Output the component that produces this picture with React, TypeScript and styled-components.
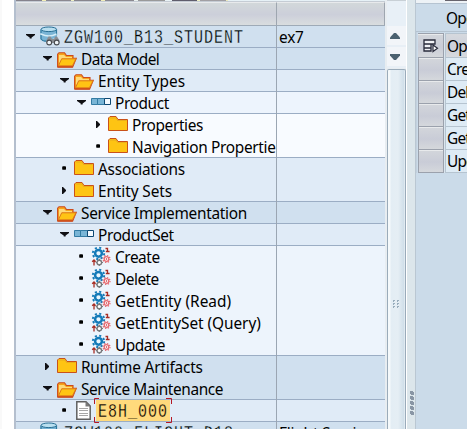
import React from "react";
import styled, { createGlobalStyle } from "styled-components";

const Global = createGlobalStyle`
  * { box-sizing: border-box; }
  html, body { margin: 0; overflow: hidden; background: #fff; }
  svg { display: block; flex: none; }
`;

const Screen = styled.main`
  display: flex;
  width: 467px;
  height: 429px;
  overflow: hidden;
  background: #fff;
  color: #000;
  font-family: "Noto Sans", "Open Sans", sans-serif;
  font-size: 15.4px;
`;

const Margin = styled.div`
  width: 14px;
  flex: none;
  border-left: 2px solid #f9f9f9;
`;

const TreePanel = styled.section`
  display: flex;
  flex-direction: column;
  width: 371px;
  flex: none;
  border-left: 2px solid #b4bfce;
`;

const ToolbarEdge = styled.div`
  height: 2px;
  flex: none;
  background: linear-gradient(90deg, #85838c 0 26px, #f3efb6 26px 30px, #8b8990 30px 55px, #eef0c4 55px 58px, #87858c 58px 85px, #f0edb9 85px 89px, #8b8990 89px 118px, #e8f0ee 118px 122px, #999 122px 149px, #e9f3f6 149px 156px, #5f5d6c 156px 181px, #eef0c4 181px 184px, #a19fa3 184px 210px, #edebbd 210px 212px, #e6f1f6 212px);
  border-bottom: 1px solid #c5ccd4;
`;

const TreeHeader = styled.div`
  display: grid;
  grid-template-columns: 261px 108px;
  height: 24px;
  flex: none;
  border-bottom: 1px solid #9eaab7;
`;

const HeaderCell = styled.div`
  border-right: 1px solid #9ea6b0;
  border-top: 1px solid #e8eaec;
  background: linear-gradient(#d2d8da 0%, #cccfda 52%, #d9dddf 100%);
`;

const TreeRow = styled.div<{ $bg: string; $line: boolean; $raised: boolean }>`
  display: grid;
  grid-template-columns: 261px 108px;
  height: 22px;
  flex: none;
  background: ${(p) => p.$bg};
  border-bottom: 1px solid ${(p) => (p.$line ? "#9badc4" : p.$bg)};
  ${(p) => p.$raised && "z-index: 1;"}
`;

const NameCell = styled.div<{ $indent: number; $clip: boolean }>`
  display: flex;
  align-items: center;
  padding-left: ${(p) => p.$indent}px;
  overflow: ${(p) => (p.$clip ? "hidden" : "visible")};
  border-right: 1px solid #9ba6b3;
  height: 22px;
  padding-bottom: 1px;
`;

const IconSlot = styled.span`
  display: flex;
  width: 24px;
  flex: none;
`;

const Toggle = styled.span`
  display: flex;
  width: 14px;
  flex: none;
`;

const Label = styled.span<{ $gap: number }>`
  white-space: pre;
  line-height: 21px;
  padding-top: 1px;
  letter-spacing: ${(p) => p.$gap}px;
`;

const MonoLabel = styled.span<{ $bg: string }>`
  display: inline-block;
  white-space: pre;
  font-family: "Liberation Mono", monospace;
  font-size: 20px;
  letter-spacing: 1.33px;
  line-height: 21px;
  -webkit-text-stroke: 0.3px ${(p) => p.$bg};
  transform: translateY(1px) scaleX(0.75);
  transform-origin: left center;
`;

const Selected = styled.span`
  position: relative;
  display: flex;
  align-items: center;
  width: 74px;
  height: 21px;
  flex: none;
  margin-left: -2px;
  padding-left: 2px;
  background: #ffda7c;
`;

const Corners = styled.svg`
  position: absolute;
  left: -2px;
  top: -2px;
`;

const ValueCell = styled.div`
  padding-left: 2px;
  line-height: 24px;
  letter-spacing: -0.2px;
  overflow: hidden;
  white-space: nowrap;
`;

const ScrollColumn = styled.div`
  display: flex;
  flex-direction: column;
  width: 21px;
  flex: none;
  padding-left: 2px;
  background: #e8edf1;
`;

const ScrollTop = styled.div`
  height: 26px;
  flex: none;
  border-top: 1px solid #c8d0d6;
  background: #e8f0f7;
`;

const ScrollButton = styled.div`
  display: flex;
  align-items: center;
  justify-content: center;
  height: 21px;
  flex: none;
  padding-right: 3px;
  background: #f2f5f9;
  border-bottom: 2px solid #e8eff6;
`;

const Thumb = styled.div`
  display: flex;
  justify-content: center;
  flex: 1;
  width: 19px;
  margin-top: 1px;
  padding-top: 230px;
  padding-right: 1px;
  border: 1px solid #9aabba;
  border-bottom: 0;
  border-radius: 2px 2px 0 0;
  background: linear-gradient(90deg, #f5f9fb 0 2px, #e3edf4 3px, #e5eef4 10px, #cfdee9 16px, #f1f6f9 17px);
`;

const Splitter = styled.div`
  display: flex;
  align-items: flex-end;
  justify-content: flex-end;
  width: 10px;
  flex: none;
  padding: 0 1px 14px 0;
  border-left: 1px solid #fff;
  border-right: 1px solid #bac7d2;
  background: #dce6eb;
`;

const RightPanel = styled.section`
  display: flex;
  flex-direction: column;
  width: 51px;
  flex: none;
  overflow: hidden;
  background: #cbdbe9;
  letter-spacing: -0.8px;
`;

const RightTop = styled.div`
  height: 4px;
  flex: none;
  background: linear-gradient(90deg, #edf2f6 0 29px, #67646d 29px) top / 100% 1px no-repeat #edf2f6;
  border-bottom: 1px solid #b6c4d1;
`;

const RightTitle = styled.div`
  height: 28px;
  flex: none;
  padding-left: 30px;
  line-height: 29px;
  border-bottom: 1px solid #b5c3d0;
`;

const OperationGrid = styled.div`
  display: flex;
  flex-direction: column;
  padding: 1px 0 0 1px;
  border-left: 1px solid #c3d1de;
`;

const OperationRow = styled.div<{ $head?: boolean }>`
  display: grid;
  grid-template-columns: 26px 24px;
  gap: 1px;
  height: ${(p) => (p.$head ? 25 : 23)}px;
  background: #dae5ee;
`;

const Selector = styled.div<{ $head?: boolean }>`
  display: flex;
  align-items: center;
  justify-content: center;
  border: 1px solid #9ba1ac;
  border-width: ${(p) => (p.$head ? "1px 1px 1px 0" : "0 1px 1px 1px")};
  box-shadow: inset 0 1px #e8eaec;
  background: linear-gradient(#d3d6db, #c9ccd7 55%, #d5d8dc);
`;

const Operation = styled.div<{ $head?: boolean }>`
  padding-left: 1px;
  line-height: ${(p) => (p.$head ? 25 : 23)}px;
  border: 1px solid #b6c4d0;
  border-width: ${(p) => (p.$head ? "1px 0 1px 1px" : "0 0 1px 1px")};
  background: ${(p) => (p.$head ? "linear-gradient(#d6d9de, #ccd0da 55%, #d7dade)" : "#deebf5")};
  white-space: nowrap;
  overflow: hidden;
`;

type Mark = "open" | "closed" | "leaf" | "none";
const ToggleIcon = ({ kind }: { kind: Mark }) => (
  <svg width="10" height="11" viewBox="0 -1 10 11">
    {kind === "open" && <path d="M0 2H9V3L5.6 5.6V6.6H3.7V5.6L0 3Z" fill="#101014" />}
    {kind === "closed" && <path d="M2 1H3L6 4V5L3 8H2Z" fill="#101014" />}
    {kind === "leaf" && <path d="M2.6 2.3H5.6V2.7H6V5.4H5.6V5.8H2.6V5.4H2.2V2.7H2.6Z" fill="#000" />}
  </svg>
);

type IconKind = "database" | "folderOpen" | "folder" | "type" | "gears" | "page";
const TreeIcon = ({ kind }: { kind: IconKind }) => {
  if (kind === "folder")
    return (
      <svg width="20" height="19" viewBox="0 0 20 19">
        <path d="M.5 15.5V3L2 1.5H8L10 4.5H19.5V15.5Z" fill="#fec413" stroke="#c9511a" />
        <path d="M2 3L8 3L9.5 5.5H18.5" fill="none" stroke="#dfa520" strokeWidth=".7" />
      </svg>
    );
  if (kind === "folderOpen")
    return (
      <svg width="20" height="19" viewBox="0 -2 20 19">
        <path d="M.6 15.9V3.2L2 1.7H7.5L9.5 4.5H16V7.3H19.3L15.7 15.9Z" fill="#f6a41a" stroke="#cd4b1c" strokeWidth="1.1" />
        <path d="M2 4H7L9 6H15V7.5H5L2 13Z" fill="#ffdb7a" />
        <path d="M4.7 7.8H19L15.4 14.8H1.4Z" fill="#ffc414" stroke="#dd7b1c" strokeWidth="1" />
        <path d="M.7 16H15.8" stroke="#cd4b1c" strokeWidth="1.4" />
      </svg>
    );
  if (kind === "type")
    return (
      <svg width="20" height="19" viewBox="0 0 20 19">
        <path d="M.5 5.5H6.5V11.5H.5ZM6.5 5.5H13.5V11.5H6.5Z" fill="#79b5d6" stroke="#337ba3" />
        <path d="M13.5 5.5H19.5V11.5H13.5Z" fill="#f4faff" stroke="#0e4873" />
      </svg>
    );
  if (kind === "database")
    return (
      <svg width="20" height="21" viewBox="0 0 20 21">
        <path d="M.5 3V13Q3 16 7 15.6L17 11V3Z" fill="#79b4d5" />
        <path d="M1 7V4M1 9V13Q3 15.5 6 15M16.5 4V9" fill="none" stroke="#2e789e" strokeWidth="1.2" />
        <ellipse cx="8.8" cy="3.3" rx="7.8" ry="2.3" fill="#b9dff0" stroke="#286f95" strokeWidth="1" />
        <path d="M1 8Q9 12 16.5 8" fill="none" stroke="#d4ecf6" strokeWidth="1.6" />
        <path d="M6.5 14L8.5 10.5H10.5L12 13H14L15.3 10.5H17L19.3 14V17H6.3Z" fill="#8a8d92" />
        <circle cx="9.2" cy="16.5" r="2.4" fill="#f0f4f7" stroke="#46484d" strokeWidth="1.1" />
        <circle cx="16.7" cy="16.5" r="2.4" fill="#f0f4f7" stroke="#46484d" strokeWidth="1.1" />
      </svg>
    );
  if (kind === "page")
    return (
      <svg width="20" height="21" viewBox="-2 0 20 21">
        <path d="M.8 1.8H10L14.2 6V19.2H.8Z" fill="#fff" stroke="#606060" strokeWidth="1.5" />
        <path d="M9.5 1.5V6.5H14.5Z" fill="#787878" />
        <path d="M3 8.5H12M3 10.5H12M3 13.5H12M3 15.5H12" stroke="#a7a7a7" />
      </svg>
    );
  return (
    <svg width="20" height="21" viewBox="0 0 20 21">
      <circle cx="7.5" cy="7.3" r="3.4" fill="#eaf6fe" stroke="#147ab8" strokeWidth="2.5" />
      <circle cx="7.5" cy="7.3" r="5.7" fill="none" stroke="#147ab8" strokeWidth="1.9" strokeDasharray="2.1 2.38" />
      <circle cx="8.3" cy="16.5" r="2.3" fill="#fff" stroke="#77797c" strokeWidth="1.4" />
      <path d="M8.3 12.8V14M4.8 16.5H6M10.6 16.5H12M8.3 18.8V20" stroke="#77797c" strokeWidth="1.2" />
      <circle cx="15.5" cy="13" r="2.3" fill="#fff" stroke="#e6696f" strokeWidth="1.2" />
      <circle cx="15.5" cy="13" r="3.5" fill="none" stroke="#e6696f" strokeWidth="1.2" strokeDasharray="1.35 1.4" />
      <circle cx="15.5" cy="13" r=".8" fill="#c22e38" />
      <path d="M14.5 2.5H16.5V6M14.8 5.5H18.6M3 13.7V19.5M1.2 15.8L3 14L4.6 15.8" fill="none" stroke="#a72c23" strokeWidth="1.3" />
    </svg>
  );
};

interface Node {
  text: string;
  level: number;
  mark: Mark;
  icon: IconKind;
  bg: string;
  line?: boolean;
  gap?: number;
  mono?: boolean;
  selected?: boolean;
  value?: string;
}

const nodes: Node[] = [
  { text: "ZGW100_B13_STUDENT", level: 0, mark: "open", icon: "database", bg: "#d0e0ef", line: true, mono: true, value: "ex7" },
  { text: "Data Model", level: 1, mark: "open", icon: "folderOpen", bg: "#d0e0ef", line: true, gap: -0.52 },
  { text: "Entity Types", level: 2, mark: "open", icon: "folderOpen", bg: "#e0ebf7", line: true, gap: 0.05 },
  { text: "Product", level: 3, mark: "open", icon: "type", bg: "#edf4fd", line: true, gap: -0.4 },
  { text: "Properties", level: 4, mark: "closed", icon: "folder", bg: "#f8fbff", gap: -0.38 },
  { text: "Navigation Propertie", level: 4, mark: "leaf", icon: "folder", bg: "#f8fbff", line: true, gap: -0.32 },
  { text: "Associations", level: 2, mark: "leaf", icon: "folder", bg: "#e0ebf7", gap: -0.22 },
  { text: "Entity Sets", level: 2, mark: "closed", icon: "folder", bg: "#e0ebf7", line: true, gap: -0.1 },
  { text: "Service Implementation", level: 1, mark: "open", icon: "folderOpen", bg: "#d0e0ef", line: true, gap: -0.28 },
  { text: "ProductSet", level: 2, mark: "open", icon: "type", bg: "#e0ebf7", line: true, gap: -0.35 },
  { text: "Create", level: 3, mark: "leaf", icon: "gears", bg: "#edf4fc", gap: -0.45 },
  { text: "Delete", level: 3, mark: "leaf", icon: "gears", bg: "#edf4fc", gap: -0.5 },
  { text: "GetEntity (Read)", level: 3, mark: "leaf", icon: "gears", bg: "#edf4fc", gap: 0 },
  { text: "GetEntitySet (Query)", level: 3, mark: "leaf", icon: "gears", bg: "#edf4fc", gap: -0.05 },
  { text: "Update", level: 3, mark: "leaf", icon: "gears", bg: "#edf4fc", line: true, gap: -0.5 },
  { text: "Runtime Artifacts", level: 1, mark: "closed", icon: "folder", bg: "#d0e0ef", gap: -0.2 },
  { text: "Service Maintenance", level: 1, mark: "open", icon: "folderOpen", bg: "#d0e0ef", line: true, gap: -0.38 },
  { text: "E8H_000", level: 2, mark: "leaf", icon: "page", bg: "#e0ebf7", line: true, mono: true, selected: true },
  { text: "ZGW100_FLIGHT_D18", level: 0, mark: "none", icon: "database", bg: "#d0e0ef", mono: true, value: "Flight Service" },
];

const NodeLabel = ({ node }: { node: Node }) => {
  if (node.selected)
    return (
      <Selected>
        <MonoLabel $bg="#ffda7c">{node.text}</MonoLabel>
        <Corners width="79" height="26" viewBox="0 0 79 26">
          <path d="M5 .5H.5V6M.5 19V24.5H5M72 .5H77.5V6M77.5 19V24.5H72" fill="none" stroke="#b51724" />
        </Corners>
      </Selected>
    );
  if (node.mono) return <MonoLabel $bg={node.bg}>{node.text}</MonoLabel>;
  return <Label $gap={node.gap ?? 0}>{node.text}</Label>;
};

export default function App() {
  return (
    <>
      <Global />
      <Screen>
        <Margin />
        <TreePanel>
          <ToolbarEdge />
          <TreeHeader>
            <HeaderCell />
            <HeaderCell />
          </TreeHeader>
          {nodes.map((node) => (
            <TreeRow key={node.text} $bg={node.bg} $line={!!node.line} $raised={!!node.selected}>
              <NameCell $indent={10 + node.level * 17} $clip={!node.selected}>
                <Toggle><ToggleIcon kind={node.mark} /></Toggle>
                <IconSlot><TreeIcon kind={node.icon} /></IconSlot>
                <NodeLabel node={node} />
              </NameCell>
              <ValueCell>{node.value}</ValueCell>
            </TreeRow>
          ))}
        </TreePanel>
        <ScrollColumn>
          <ScrollTop />
          <ScrollButton>
            <svg width="10" height="6" viewBox="0 0 10 6"><path d="M0 6V4.5L4 0H6L10 4.5V6Z" fill="#4b6170" /></svg>
          </ScrollButton>
          <ScrollButton>
            <svg width="10" height="6" viewBox="0 0 10 6"><path d="M0 0V1.5L4 6H6L10 1.5V0Z" fill="#4b6170" /></svg>
          </ScrollButton>
          <Thumb>
            <svg width="6" height="8" viewBox="0 0 6 8">
              <path d="M0 0H2V1H1V2H0ZM4 0H6V1H5V2H4ZM0 3H2V4H1V5H0ZM4 3H6V4H5V5H4ZM0 6H2V7H1V8H0ZM4 6H6V7H5V8H4Z" fill="#98adbc" />
            </svg>
          </Thumb>
        </ScrollColumn>
        <Splitter>
          <svg width="4" height="24" viewBox="0 0 4 24">
            {[0, 5, 10, 15, 20].map((y) => (
              <path key={y} d={`M0 ${y}H3V${y + 1}H4V${y + 4}H1V${y + 3}H0Z`} fill="#8996a5" />
            ))}
          </svg>
        </Splitter>
        <RightPanel>
          <RightTop />
          <RightTitle>Operations</RightTitle>
          <OperationGrid>
            <OperationRow $head>
              <Selector $head>
                <svg width="16" height="14" viewBox="0 0 16 14">
                  <path d="M1 1H12V5H1ZM1 5H8V9H1ZM1 9H8V12H1Z" fill="#f0f1f5" stroke="#292b3b" strokeWidth="1.3" />
                  <path d="M10 6L14.5 9.3L10 12.6Z" fill="#fff" stroke="#292b3b" strokeWidth="1.2" />
                </svg>
              </Selector>
              <Operation $head>Operation</Operation>
            </OperationRow>
            {["Create", "Delete", "GetEntity", "GetEntitySet", "Update"].map((op) => (
              <OperationRow key={op}><Selector /><Operation>{op}</Operation></OperationRow>
            ))}
          </OperationGrid>
        </RightPanel>
      </Screen>
    </>
  );
}
